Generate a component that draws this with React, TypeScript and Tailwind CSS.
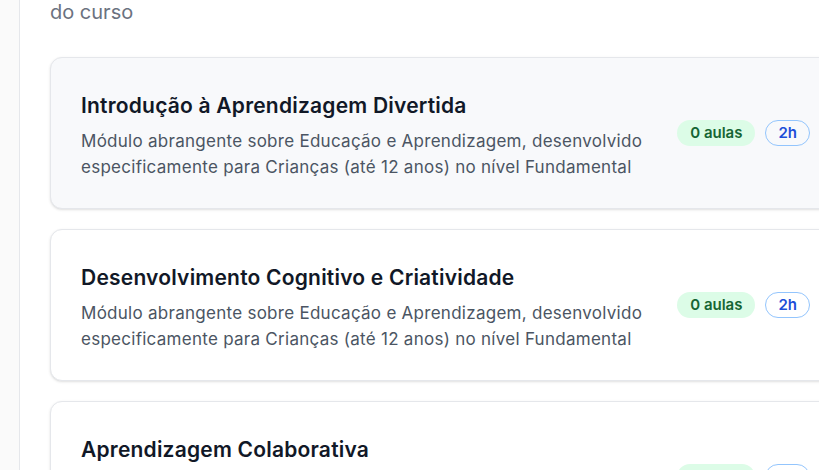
import React from "react";

const modules = [
  {
    title: "Introdução à Aprendizagem Divertida",
    hover: true,
  },
  {
    title: "Desenvolvimento Cognitivo e Criatividade",
    hover: false,
  },
  {
    title: "Aprendizagem Colaborativa",
    hover: false,
  },
];

const desc =
  "Módulo abrangente sobre Educação e Aprendizagem, desenvolvido especificamente para Crianças (até 12 anos) no nível Fundamental";

export default function App() {
  return (
    <div
      className="w-[819px] h-[470px] overflow-hidden flex bg-white"
      style={{ fontFamily: "Inter, 'Noto Sans', sans-serif" }}
    >
      <div className="w-[20px] shrink-0 bg-[#fafafa] border-r border-[#e5e7eb]" />
      <main className="flex-1 min-w-0 pl-[30px]">
        <p className="text-[20px] leading-[28px] text-[#6b7280] mt-[-2px]">do curso</p>
        <div className="mt-[31px] flex flex-col gap-5 w-[791px]">
          {modules.map((m) => (
            <div
              key={m.title}
              className={`flex items-center rounded-xl border border-[#e5e7eb] shadow-sm pl-[30px] pr-[30px] py-[28px] ${
                m.hover ? "bg-[#f8f9fb]" : "bg-white"
              }`}
            >
              <div className="flex-1 min-w-0 pt-[6px] pr-4">
                <h3 className="text-[21px] leading-[28px] font-semibold text-[#111827] tracking-[0.01em]">
                  {m.title}
                </h3>
                <p className="mt-2 text-[17px] leading-[26px] text-[#4b5563] tracking-[0.016em] max-w-[575px]">
                  {desc}
                </p>
              </div>
              <div className="flex items-center gap-[10px] shrink-0">
                <span className="h-[26px] px-[13px] rounded-full bg-[#dcfce7] text-[#166534] text-[15px] font-semibold flex items-center">
                  0 aulas
                </span>
                <span className="h-[26px] px-3 rounded-full border border-[#93c5fd] text-[#1d4ed8] text-[15px] font-semibold flex items-center">
                  2h
                </span>
              </div>
            </div>
          ))}
        </div>
      </main>
    </div>
  );
}
